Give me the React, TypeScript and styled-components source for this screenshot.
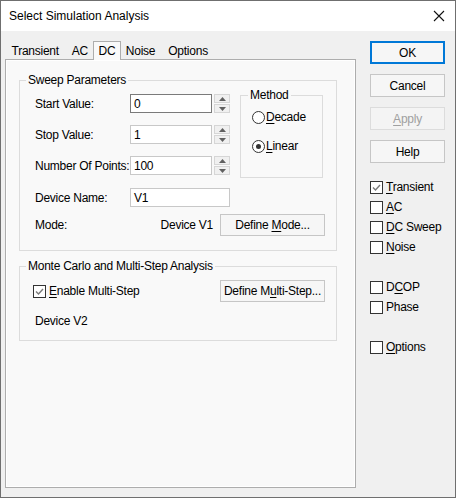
import styled, { createGlobalStyle } from 'styled-components'

const GlobalStyle = createGlobalStyle`
   html, body {
      margin: 0;
      padding: 0;
      background: #f0f0f0;
   }
   * {
      box-sizing: border-box;
   }
`

const U = ({ children }: { children: string }) => <Mn>{children}</Mn>

const Spin = () => (
   <Spinner>
      <SpinHalf>
         <svg width="7" height="4" viewBox="0 0 7 4">
            <path d="M3.5 0 L7 4 L0 4 Z" fill="#606060" />
         </svg>
      </SpinHalf>
      <SpinHalf>
         <svg width="7" height="4" viewBox="0 0 7 4">
            <path d="M0 0 L7 0 L3.5 4 Z" fill="#606060" />
         </svg>
      </SpinHalf>
   </Spinner>
)

const Check = ({ checked }: { checked?: boolean }) => (
   <Box>
      {checked && (
         <svg width="11" height="11" viewBox="0 0 11 11">
            <path
               d="M2 5.5 L4.5 8 L9 3"
               fill="none"
               stroke="#7a7a7a"
               strokeWidth="1.4"
            />
         </svg>
      )}
   </Box>
)

const sweepRows = [
   { label: 'Start Value:', value: '0', focused: true },
   { label: 'Stop Value:', value: '1' },
   { label: 'Number Of Points:', value: '100' },
]

const App = () => {
   return (
      <>
         <GlobalStyle />
         <Window>
            <TitleBar>
               <Title>Select Simulation Analysis</Title>
               <svg width="12" height="12" viewBox="0 0 12 12">
                  <path
                     d="M1 1 L11 11 M11 1 L1 11"
                     stroke="#111"
                     strokeWidth="1.1"
                  />
               </svg>
            </TitleBar>
            <Body>
               <TabsColumn>
                  <TabList>
                     <Tab>Transient</Tab>
                     <Tab>AC</Tab>
                     <Tab $active>DC</Tab>
                     <Tab>Noise</Tab>
                     <Tab>Options</Tab>
                  </TabList>
                  <Panel>
                     <Group $height={171}>
                        <Legend>Sweep Parameters</Legend>
                        <TopArea>
                           <Rows>
                              {sweepRows.map(({ label, value, focused }) => (
                                 <Row key={label}>
                                    <Label>{label}</Label>
                                    <Input $width={82} $focused={focused}>
                                       {value}
                                    </Input>
                                    <Spin />
                                 </Row>
                              ))}
                           </Rows>
                           <MethodGroup>
                              <MethodLegend>Method</MethodLegend>
                              <Radio>
                                 <Circle />
                                 <span>
                                    <U>D</U>ecade
                                 </span>
                              </Radio>
                              <Radio>
                                 <Circle $on />
                                 <span>
                                    <U>L</U>inear
                                 </span>
                              </Radio>
                           </MethodGroup>
                        </TopArea>
                        <NameRow>
                           <Label>Device Name:</Label>
                           <Input $width={100}>V1</Input>
                        </NameRow>
                        <ModeRow>
                           <Label>Mode:</Label>
                           <ModeValue>Device V1</ModeValue>
                           <Button $width={105}>
                              <span>
                                 Define <U>M</U>ode...
                              </span>
                           </Button>
                        </ModeRow>
                     </Group>
                     <Group $height={75}>
                        <Legend>Monte Carlo and Multi-Step Analysis</Legend>
                        <StepRow>
                           <CheckItem>
                              <Check checked />
                              <span>
                                 <U>E</U>nable Multi-Step
                              </span>
                           </CheckItem>
                           <Button $width={105}>
                              <span>
                                 Define M<U>u</U>lti-Step...
                              </span>
                           </Button>
                        </StepRow>
                        <Note>Device V2</Note>
                     </Group>
                  </Panel>
               </TabsColumn>
               <Side>
                  <Button $width={75} $height={23} $default>
                     OK
                  </Button>
                  <Button $width={75} $height={23}>
                     Cancel
                  </Button>
                  <Button $width={75} $height={23} $disabled>
                     <span>
                        <U>A</U>pply
                     </span>
                  </Button>
                  <Button $width={75} $height={23}>
                     Help
                  </Button>
                  <CheckList>
                     <CheckItem>
                        <Check checked />
                        <span>
                           <U>T</U>ransient
                        </span>
                     </CheckItem>
                     <CheckItem>
                        <Check />
                        <span>
                           <U>A</U>C
                        </span>
                     </CheckItem>
                     <CheckItem>
                        <Check />
                        <span>
                           <U>D</U>C Sweep
                        </span>
                     </CheckItem>
                     <CheckItem>
                        <Check />
                        <span>
                           <U>N</U>oise
                        </span>
                     </CheckItem>
                     <Gap $h={20} />
                     <CheckItem>
                        <Check />
                        <span>
                           D<U>C</U>OP
                        </span>
                     </CheckItem>
                     <CheckItem>
                        <Check />
                        <span>Phase</span>
                     </CheckItem>
                     <Gap $h={20} />
                     <CheckItem>
                        <Check />
                        <span>
                           <U>O</U>ptions
                        </span>
                     </CheckItem>
                  </CheckList>
               </Side>
            </Body>
         </Window>
      </>
   )
}

export default App

const Window = styled.div`
   width: 456px;
   height: 498px;
   border: 1px solid #6f6f6f;
   background: #f0f0f0;
   display: flex;
   flex-direction: column;
   font-family: 'Liberation Sans', Arial, sans-serif;
   font-size: 12px;
   letter-spacing: -0.25px;
   color: #000;
`
const TitleBar = styled.div`
   height: 30px;
   background: #fff;
   display: flex;
   align-items: center;
   justify-content: space-between;
   padding: 0 10px 0 8px;
   flex-shrink: 0;
`
const Title = styled.div`
   font-size: 12px;
   letter-spacing: 0;
   color: #000;
`
const Body = styled.div`
   flex: 1;
   display: flex;
   padding: 9px 0 0 4px;
   gap: 14px;
`
const TabsColumn = styled.div`
   display: flex;
   flex-direction: column;
   width: 351px;
`
const TabList = styled.div`
   display: flex;
   height: 19px;
   align-items: flex-end;
   position: relative;
   z-index: 1;
`
const Tab = styled.div<{ $active?: boolean }>`
   height: ${(p) => (p.$active ? '19px' : '17px')};
   padding: ${(p) => (p.$active ? '0 5px 1px' : '0 5.5px')};
   margin: ${(p) => (p.$active ? '0 -2px -1px' : '0')};
   display: flex;
   align-items: center;
   background: ${(p) => (p.$active ? '#f9f9f9' : 'transparent')};
   border: ${(p) => (p.$active ? '1px solid #adadad' : '1px solid transparent')};
   border-bottom: none;
   position: relative;
   white-space: nowrap;
`
const Panel = styled.div`
   height: 429px;
   border: 1px solid #adadad;
   background: #f9f9f9;
   box-shadow: inset 1px 1px 0 #fff, inset -1px -1px 0 #fff;
   padding: 13px 18px 0 13px;
   display: flex;
   flex-direction: column;
   gap: 8px;
`
const Group = styled.fieldset<{ $height: number }>`
   margin: 0;
   min-width: 0;
   border: 1px solid #dcdcdc;
   padding: 0 0 0 15px;
   height: ${(p) => p.$height + 7}px;
   display: flex;
   flex-direction: column;
`
const Legend = styled.legend`
   padding: 0 2px;
   margin-left: -9px;
   line-height: 14px;
   white-space: nowrap;
`
const MethodLegend = styled(Legend)`
   margin-left: -4px;
`
const TopArea = styled.div`
   display: flex;
   align-items: flex-start;
   gap: 10px;
   margin-top: 3px;
`
const Rows = styled.div`
   display: flex;
   flex-direction: column;
   padding-top: 4px;
   gap: 12px;
`
const Row = styled.div`
   display: flex;
   align-items: center;
   height: 19px;
`
const NameRow = styled(Row)`
   margin-top: 10px;
`
const Label = styled.div`
   width: 95px;
   flex-shrink: 0;
   white-space: nowrap;
`
const Input = styled.div<{ $width: number; $focused?: boolean }>`
   width: ${(p) => p.$width}px;
   height: 19px;
   background: #fff;
   border: 1px solid ${(p) => (p.$focused ? '#7a7a7a' : '#c8c8c8')};
   padding: 0 0 0 3px;
   display: flex;
   align-items: center;
`
const Spinner = styled.div`
   width: 16px;
   height: 19px;
   margin-left: 2px;
   display: flex;
   flex-direction: column;
   gap: 1px;
`
const SpinHalf = styled.div`
   flex: 1;
   background: #f0f0f0;
   border: 1px solid #d6d6d6;
   display: flex;
   align-items: center;
   justify-content: center;
`
const MethodGroup = styled.fieldset`
   margin: -2px 0 0 0;
   width: 83px;
   height: 90px;
   border: 1px solid #dcdcdc;
   padding: 8px 0 0 11px;
   display: flex;
   flex-direction: column;
   gap: 15px;
`
const Radio = styled.div`
   display: flex;
   align-items: center;
   gap: 1px;
   height: 14px;
`
const Circle = styled.span<{ $on?: boolean }>`
   width: 13px;
   height: 13px;
   border-radius: 50%;
   border: 1px solid #333;
   background: #fff;
   display: inline-flex;
   align-items: center;
   justify-content: center;
   &::after {
      content: '';
      width: 5px;
      height: 5px;
      border-radius: 50%;
      background: ${(p) => (p.$on ? '#333' : 'transparent')};
   }
`
const Mn = styled.span`
   text-decoration: underline;
   text-underline-offset: 2px;
`
const ModeRow = styled.div`
   display: flex;
   align-items: center;
   margin-top: 7px;
`
const ModeValue = styled.div`
   width: 83px;
   text-align: right;
   margin-right: 7px;
   white-space: nowrap;
`
const Button = styled.div<{
   $width: number
   $height?: number
   $default?: boolean
   $disabled?: boolean
}>`
   width: ${(p) => p.$width}px;
   height: ${(p) => p.$height ?? 22}px;
   display: flex;
   align-items: center;
   justify-content: center;
   background: ${(p) => (p.$disabled ? '#f4f4f4' : '#f6f6f6')};
   border: 1px solid
      ${(p) => (p.$default ? '#0078d7' : p.$disabled ? '#dcdcdc' : '#c6c6c6')};
   box-shadow: ${(p) => (p.$default ? 'inset 0 0 0 1px #0078d7' : 'none')};
   color: ${(p) => (p.$disabled ? '#a0a0a0' : '#000')};
   white-space: nowrap;
`
const StepRow = styled.div`
   display: flex;
   align-items: center;
   justify-content: space-between;
   padding-right: 11px;
   margin-left: -2px;
   margin-top: 7px;
`
const CheckItem = styled.div`
   display: flex;
   align-items: center;
   height: 20px;
   gap: 3px;
`
const Box = styled.span`
   width: 13px;
   height: 13px;
   border: 1px solid #333;
   background: #fff;
   display: inline-flex;
   align-items: center;
   justify-content: center;
`
const Note = styled.div`
   margin-top: 12px;
`
const Side = styled.div`
   display: flex;
   flex-direction: column;
   gap: 10px;
   padding-top: 1px;
`
const CheckList = styled.div`
   display: flex;
   flex-direction: column;
   margin-top: 4px;
`
const Gap = styled.div<{ $h: number }>`
   height: ${(p) => p.$h}px;
`
